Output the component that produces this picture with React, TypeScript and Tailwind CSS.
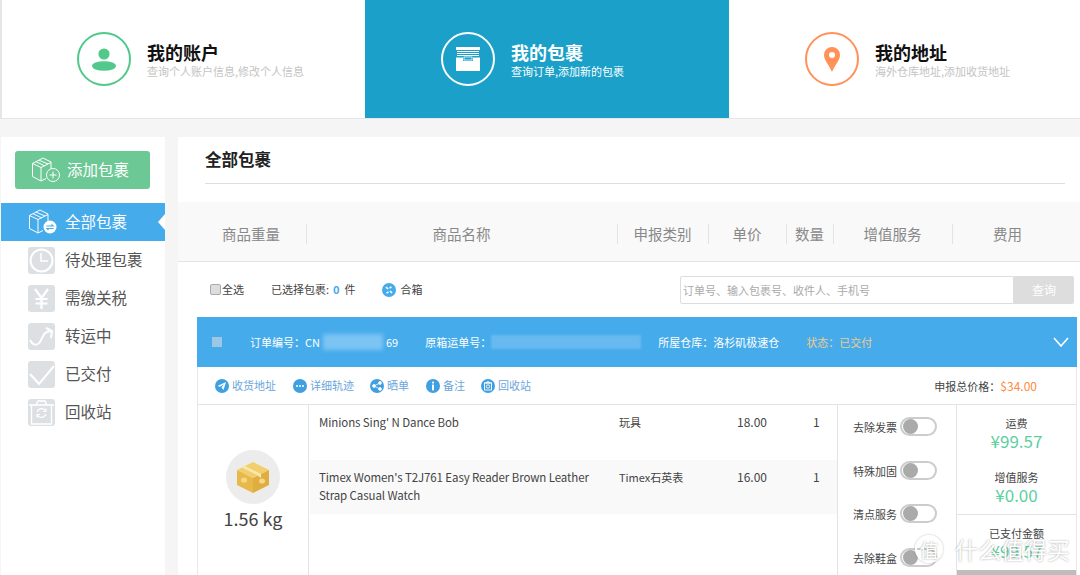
import React from 'react';

const font = { fontFamily: '"Noto Sans CJK SC", "Liberation Sans", sans-serif' };

const BoxOutline = ({ badge }: { badge: 'plus' | 'swap' }) => (
  <svg width="30" height="26" viewBox="0 0 30 26" fill="none" stroke="#fff" strokeWidth="1">
    <path d="M1.5 6.5 L12 1 L20 5 L20 12 M1.5 6.5 L10 10.5 L10 24 L1.5 19.5 Z M10 10.5 L20 5.5 M10 24 L15 21.5" />
    <path d="M5 4.7 L14 9 M8 3.2 L17 7" />
    {badge === 'plus' ? (
      <g>
        <circle cx="22" cy="18" r="6.5" />
        <path d="M22 14.5 V21.5 M18.5 18 H25.5" />
      </g>
    ) : (
      <g>
        <circle cx="22" cy="18" r="6.5" fill="#fff" stroke="none" />
        <path d="M18.5 17 H25 L23.5 15.5 M25.5 19.5 H19 L20.5 21" stroke="#45abeb" strokeWidth="1.2" />
      </g>
    )}
  </svg>
);

const Tile = ({ children }: { children: React.ReactNode }) => (
  <div className="w-[27px] h-[27px] rounded-[3px] bg-[#dde0e3] flex items-center justify-center overflow-hidden">
    <svg width="27" height="27" viewBox="0 0 27 27" fill="none" stroke="#fff" strokeWidth="2">
      {children}
    </svg>
  </div>
);

const sideItems: { label: string; icon: React.ReactNode }[] = [
  {
    label: '待处理包裹',
    icon: (
      <g>
        <circle cx="13.5" cy="13.5" r="11" />
        <path d="M13 6 V14 H20" strokeWidth="1.5" />
      </g>
    ),
  },
  {
    label: '需缴关税',
    icon: <path d="M7 4 L13.5 13 L20 4 M13.5 13 V24 M7.5 14 H19.5 M7.5 18.5 H19.5" strokeWidth="2.2" />,
  },
  {
    label: '转运中',
    icon: <path d="M2 17 C6 24 11 23 14 15 C15.5 11 18 8 23 8 M18 5 L24 8 L23 15" />,
  },
  {
    label: '已交付',
    icon: <path d="M2 13 L11 23 L26 5" />,
  },
  {
    label: '回收站',
    icon: (
      <g strokeWidth="1.4">
        <path d="M1 6 H26 M8 6 L10 2 H17 L19 6 M3.5 6 V25 H23.5 V6" />
        <path d="M9 13 A5 5 0 0 1 18 12 M18 15 A5 5 0 0 1 9 16 M18 9.5 V12.5 H15 M9 18.5 V15.5 H12" strokeWidth="1.1" />
      </g>
    ),
  },
];

const heads = [
  { t: '商品重量', w: 'w-[129px] pl-[18px]' },
  { t: '商品名称', w: 'w-[311px] pr-px' },
  { t: '申报类别', w: 'w-[91px] pr-px' },
  { t: '单价', w: 'w-[78px] pr-px' },
  { t: '数量', w: 'w-[47px] pr-px' },
  { t: '增值服务', w: 'w-[119px] pr-px' },
  { t: '费用', w: 'w-[127px] pr-[18px]' },
];

const Circle = ({ children }: { children: React.ReactNode }) => (
  <svg width="14" height="14" viewBox="0 0 14 14" className="shrink-0">
    <circle cx="7" cy="7" r="7" fill="#3f9fe0" />
    {children}
  </svg>
);

const actions: { label: string; w: string; icon: React.ReactNode }[] = [
  { label: '收货地址', w: 'w-[78px]', icon: <path d="M2.5 7 L11 3 L8.5 11 L6.5 8.5 L9 5 L5 7.8 Z" fill="#fff" /> },
  {
    label: '详细轨迹',
    w: 'w-[77px]',
    icon: (
      <g fill="#fff">
        <circle cx="4" cy="7" r="1" />
        <circle cx="7" cy="7" r="1" />
        <circle cx="10" cy="7" r="1" />
      </g>
    ),
  },
  {
    label: '晒单',
    w: 'w-[56px]',
    icon: (
      <g fill="#fff" stroke="#fff" strokeWidth="0.8">
        <circle cx="4" cy="7" r="1.4" />
        <circle cx="10" cy="4" r="1.4" />
        <circle cx="10" cy="10" r="1.4" />
        <path d="M4 7 L10 4 M4 7 L10 10" fill="none" />
      </g>
    ),
  },
  {
    label: '备注',
    w: 'w-[55px]',
    icon: (
      <g fill="#fff">
        <circle cx="7" cy="3.6" r="1.1" />
        <rect x="6" y="5.6" width="2" height="5.8" />
      </g>
    ),
  },
  {
    label: '回收站',
    w: 'w-[70px]',
    icon: (
      <g fill="none" stroke="#fff" strokeWidth="0.9">
        <rect x="3.5" y="4" width="7" height="7" />
        <path d="M3 4 H11 M5.5 4 L6 2.8 H8 L8.5 4" />
        <circle cx="7" cy="7.5" r="1.7" />
      </g>
    ),
  },
];

const services = ['去除发票', '特殊加固', '清点服务', '去除鞋盒'];

const NavCol = ({
  w,
  active,
  ring,
  title,
  sub,
  icon,
}: {
  w: string;
  active?: boolean;
  ring: string;
  title: string;
  sub: string;
  icon: React.ReactNode;
}) => (
  <div className={`${w} h-full flex items-center ${active ? 'bg-[#1ba1c9]' : ''}`}>
    <div className={`w-[54px] h-[54px] rounded-full border-2 flex items-center justify-center ${ring}`}>{icon}</div>
    <div className="ml-[16px] mt-[-1px]">
      <div className={`text-[18px] leading-[24px] font-bold ${active ? 'text-white' : 'text-[#111]'}`}>{title}</div>
      <div className={`text-[11px] leading-[14px] ${active ? 'text-white' : 'text-[#c4c4c4]'}`}>{sub}</div>
    </div>
  </div>
);

const App = () => {
  return (
    <div className="w-[1080px] h-[575px] overflow-hidden bg-[#f5f5f5] relative" style={font}>
      <div className="h-[119px] bg-white border-b border-[#e6e6e6] flex">
        <NavCol
          w="w-[365px] border-l-2 border-[#e6e6e6] pl-[75px]"
          ring="border-[#4fc98a]"
          title="我的账户"
          sub="查询个人账户信息,修改个人信息"
          icon={
            <svg width="26" height="26" viewBox="0 0 26 26" fill="#50c98b">
              <circle cx="13" cy="8" r="5.6" />
              <ellipse cx="13" cy="20" rx="12" ry="4.8" />
            </svg>
          }
        />
        <NavCol
          w="w-[364px] pl-[76px]"
          active
          ring="border-white"
          title="我的包裹"
          sub="查询订单,添加新的包裹"
          icon={
            <svg width="26" height="26" viewBox="0 0 26 26" fill="#fff">
              <rect x="1" y="1" width="24" height="3" />
              <rect x="2" y="5" width="22" height="1" />
              <rect x="2" y="7" width="22" height="1" />
              <rect x="2" y="9" width="22" height="1" />
              <path d="M1 11.5 H8 V15 H18 V11.5 H25 V25 H1 Z" />
              <rect x="9" y="11" width="8" height="3" fill="none" stroke="#fff" strokeWidth="0.8" />
            </svg>
          }
        />
        <NavCol
          w="flex-1 pl-[76px]"
          ring="border-[#ff9159]"
          title="我的地址"
          sub="海外仓库地址,添加收货地址"
          icon={
            <svg width="16" height="25" viewBox="0 0 16 25" fill="#ff9159">
              <path d="M8 0 A8 8 0 0 1 16 8 C16 13 11 18 8 25 C5 18 0 13 0 8 A8 8 0 0 1 8 0 Z" />
              <circle cx="8" cy="8" r="3" fill="#fff" />
            </svg>
          }
        />
      </div>

      <div className="flex mt-[18px] h-[438px]">
        <aside className="ml-px w-[164px] bg-white relative">
          <div className="pt-[14px] pl-[14px]">
            <div className="w-[135px] h-[38px] rounded-[3px] bg-[#6cc894] flex items-center pl-[16px] pb-[1px]">
              <BoxOutline badge="plus" />
              <span className="ml-[6px] text-[15.5px] text-white">添加包裹</span>
            </div>
          </div>
          <div className="mt-[14px] h-[38px] bg-[#45abeb] flex items-center pl-[27px] pb-[1px] relative">
            <BoxOutline badge="swap" />
            <span className="ml-[7px] text-[15.5px] text-white">全部包裹</span>
            <div className="absolute right-0 top-[11px] w-0 h-0 border-y-[8px] border-y-transparent border-r-[7px] border-r-white" />
          </div>
          <div className="pt-[6px]">
            {sideItems.map((s) => (
              <div key={s.label} className="h-[38px] flex items-start pl-[27px]">
                <Tile>{s.icon}</Tile>
                <span className="ml-[10px] text-[15.5px] leading-[25px] text-[#555]">{s.label}</span>
              </div>
            ))}
          </div>
        </aside>

        <main className="ml-[13px] flex-1 bg-white">
          <div className="h-[65px] pl-[28px] pr-[15px] ml-[-1px]">
            <div className="h-[47px] border-b border-[#dedede] text-[16.5px] font-bold text-[#222] leading-[45px]">全部包裹</div>
          </div>
          <div className="h-[60px] pt-[5px] bg-[#f9f9f9] border-b border-[#e3e3e3] flex items-center text-[14.5px] text-[#888]">
            {heads.map((h, i) => (
              <div key={h.t} className={`${h.w} h-[20px] leading-[20px] text-center ${i < 6 ? 'border-r border-[#e3e3e3]' : ''}`}>
                {h.t}
              </div>
            ))}
          </div>

          <div className="h-[55px] flex items-center text-[11px] text-[#444] pl-[32px] pr-[6px] whitespace-nowrap">
            <span className="w-[11px] h-[11px] rounded-[2px] border border-[#aaa] bg-[#ddd]" />
            <span className="ml-px">全选</span>
            <span className="ml-[27px]">已选择包裹:</span>
            <span className="ml-[4px] font-bold text-[#45abeb]">0</span>
            <span className="ml-[5px]">件</span>
            <svg width="14" height="14" viewBox="0 0 14 14" className="ml-[26px]">
              <circle cx="7" cy="7" r="7" fill="#45abeb" />
              <path d="M4 4 L6 6 M10 10 L8 8 M9.5 4 L7.5 5 M4.5 10 L6.5 9" stroke="#fff" strokeWidth="1.6" />
            </svg>
            <span className="ml-[5px]">合箱</span>
            <div className="ml-auto w-[334px] h-[28px] border border-[#ddd] rounded-l-[2px] pl-[2px] leading-[26px] text-[#aaa]">
              订单号、输入包裹号、收件人、手机号
            </div>
            <div className="w-[60px] h-[28px] bg-[#dddddd] rounded-r-[2px] text-center text-[12px] leading-[28px] text-white">查询</div>
          </div>

          <div className="ml-[19px] w-[880px]">
            <div className="h-[50px] bg-[#45abeb] flex items-center pl-[15px] text-[11px] text-white relative whitespace-nowrap">
              <span className="w-[10px] h-[10px] bg-[#9cc8e6]" />
              <span className="ml-[28px]">订单编号：CN</span>
              <span className="ml-[3px] w-[60px] h-[16px] bg-[#7cc4f3] blur-[2px]" />
              <span className="ml-[3px]">69</span>
              <span className="ml-[27px]">原箱运单号：</span>
              <span className="w-[150px] h-[14px] bg-[#68b9f0] blur-[1px]" />
              <span className="ml-[17px]">所屋仓库：洛杉矶极速仓</span>
              <span className="ml-[27px] text-[#eecb8f]">状态：已交付</span>
              <svg width="16" height="10" viewBox="0 0 16 10" fill="none" stroke="#fff" strokeWidth="1.6" className="absolute right-[8px] top-[20px]">
                <path d="M1 1 L8 9 L15 1" />
              </svg>
            </div>
            <div className="border-x border-[#e8e8e8]">
              <div className="h-[38px] border-b border-[#e3e3e3] flex items-center pl-[17px] text-[11px] text-[#6aa6dc] whitespace-nowrap">
                {actions.map((a) => (
                  <div key={a.label} className={`${a.w} flex items-center gap-[3px]`}>
                    <Circle>{a.icon}</Circle>
                    <span>{a.label}</span>
                  </div>
                ))}
                <div className="ml-auto mr-[39px] text-[#444]">
                  申报总价格：<span className="text-[12px] text-[#ff8c42]">$34.00</span>
                </div>
              </div>
              <div className="flex h-[171px]">
                <div className="w-[111px] border-r border-[#e3e3e3] flex flex-col items-center pt-[45px]">
                  <div className="w-[54px] h-[54px] rounded-full bg-[#ececec] flex items-center justify-center">
                    <svg width="34" height="34" viewBox="0 0 34 34">
                      <path d="M17 2 L33 10 L17 18 L1 10 Z" fill="#f3cf6c" />
                      <path d="M1 10 L17 18 V33 L1 25 Z" fill="#e8b94a" />
                      <path d="M33 10 L17 18 V33 L33 25 Z" fill="#dfae3f" />
                      <path d="M9 6 L25 14 L25 18 L22 16 V15.5 L6 7.5 Z" fill="#f8e6b0" />
                      <ellipse cx="8" cy="20" rx="3" ry="2.6" fill="#f3d88a" />
                      <ellipse cx="26" cy="21" rx="3" ry="2.6" fill="#f3d88a" />
                    </svg>
                  </div>
                  <div className="text-[18px] leading-[28px] text-[#444]">1.56 kg</div>
                </div>
                <div className="w-[529px] border-r border-[#e3e3e3] text-[12px] leading-[18px] text-[#444] pl-px">
                  <div className="flex h-[55px] pt-[8px]">
                    <div className="w-[309px] pl-[9px] text-[11.5px] tracking-[-0.1px]">Minions Sing' N Dance Bob</div>
                    <div className="w-[118px] text-[11px]">玩具</div>
                    <div className="w-[76px]">18.00</div>
                    <div>1</div>
                  </div>
                  <div className="flex h-[54px] pt-[8px] bg-[#f9f9f9]">
                    <div className="w-[309px] pl-[9px] pr-[20px] text-[11.5px] tracking-[-0.1px]">Timex Women's T2J761 Easy Reader Brown Leather Strap Casual Watch</div>
                    <div className="w-[118px] text-[11px]">Timex石英表</div>
                    <div className="w-[76px]">16.00</div>
                    <div>1</div>
                  </div>
                </div>
                <div className="w-[119px] border-r border-[#e3e3e3] pl-[15px] pt-[12px] text-[11px] text-[#444] whitespace-nowrap">
                  {services.map((s) => (
                    <div key={s} className="h-[43.7px] flex items-start">
                      <span className="w-[47px] leading-[20px]">{s}</span>
                      <span className="w-[37px] h-[19px] rounded-full border-2 border-[#ccc] bg-white flex items-center pl-px">
                        <span className="w-[15px] h-[15px] rounded-full bg-[#aaa]" />
                      </span>
                    </div>
                  ))}
                </div>
                <div className="flex-1 text-center text-[#444] text-[11px]">
                  <div className="h-[110px] border-b border-[#e3e3e3] pt-[9px]">
                    <div className="leading-[18px]">运费</div>
                    <div className="text-[17px] leading-[17px] text-[#5ccf9f]">¥99.57</div>
                    <div className="leading-[18px] mt-[19px]">增值服务</div>
                    <div className="text-[17px] leading-[17px] text-[#5ccf9f]">¥0.00</div>
                  </div>
                  <div className="pt-[9px] h-[60px] relative">
                    <div className="leading-[18px]">已支付金额</div>
                    <div className="text-[17px] leading-[17px] text-[#5ccf9f]">¥99.57</div>
                    <div className="absolute top-[55px] left-0 right-0 h-[6px] bg-[#bdbdbd]" />
                  </div>
                </div>
              </div>
            </div>
          </div>
        </main>
      </div>

      <div className="absolute left-[915px] top-[535px] flex items-center text-white [text-shadow:0_0_2px_rgba(90,90,90,0.6)]">
        <div className="w-[28px] h-[28px] rounded-full border-2 border-white shadow-[0_0_2px_rgba(90,90,90,0.5)] flex items-center justify-center text-[19px] leading-none">值</div>
        <div className="ml-[12px] text-[23px] leading-none">什么值得买</div>
      </div>
    </div>
  );
};

export default App;
